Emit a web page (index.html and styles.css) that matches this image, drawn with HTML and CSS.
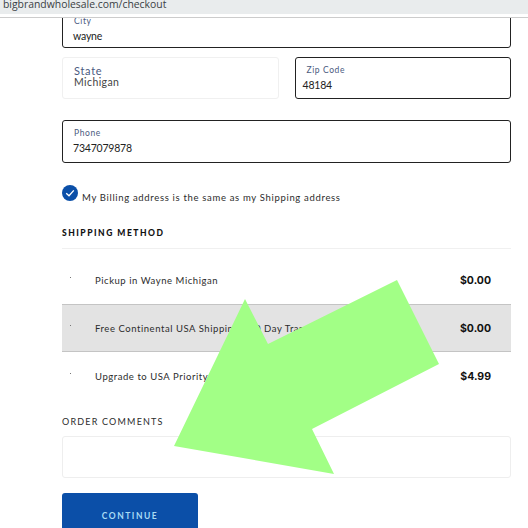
FILE: index.html
```html
<!DOCTYPE html>
<html lang="en" dir="ltr">
<head>
  <meta charset="utf-8">
  <title>Checkout</title>
  <link rel="stylesheet" href="styles.css">
</head>
<body>

  <div class="url-bar">bigbrandwholesale.com/checkout</div>

  <div class="checkout">
    <div class="field field-active field-city">
      <div class="field-label">City</div>
      <div class="field-value">wayne</div>
    </div>

    <div class="field-row">
      <div class="field field-empty">
        <div class="state-label">State</div>
        <div class="state-value">Michigan</div>
      </div>
      <div class="field field-active">
        <div class="field-label">Zip Code</div>
        <div class="field-value zip-value">48184</div>
      </div>
    </div>

    <div class="field field-active field-phone">
      <div class="field-label">Phone</div>
      <div class="field-value">7347079878</div>
    </div>

    <div class="billing-check">
      <svg class="check-icon" width="16" height="16" viewBox="0 0 16 16">
        <circle cx="8" cy="8" r="8" fill="#0b4fa8"/>
        <path d="M4.2 8.2 L7 10.8 L11.8 5.4" fill="none" stroke="#fff" stroke-width="1.3"/>
      </svg>
      <span class="check-text">My Billing address is the same as my Shipping address</span>
    </div>

    <h3 class="section-title">SHIPPING METHOD</h3>

    <div class="ship-list">
      <div class="ship-row ship-first">
        <span class="ship-dot"></span>
        <span class="ship-name">Pickup in Wayne Michigan</span>
        <span class="ship-price">$0.00</span>
      </div>
      <div class="ship-row ship-selected">
        <span class="ship-dot"></span>
        <span class="ship-name">Free Continental USA Shipping - 10 Day Transit</span>
        <span class="ship-price">$0.00</span>
      </div>
      <div class="ship-row">
        <span class="ship-dot"></span>
        <span class="ship-name">Upgrade to USA Priority Mail</span>
        <span class="ship-price">$4.99</span>
      </div>
    </div>

    <div class="comments-label">ORDER COMMENTS</div>
    <div class="comments-box"></div>

    <button class="continue-btn">CONTINUE</button>
  </div>

  <svg class="arrow" width="528" height="528" viewBox="0 0 528 528">
    <polygon points="245,299 268,344 397,280 439,364 312,429 334,474 174,446" fill="#a2ff86"/>
  </svg>

</body>
</html>
```

FILE: styles.css
```css
body {
  margin: 0;
  height: 528px;
  overflow: hidden;
  position: relative;
  background: #fff;
  font-family: "Lato", sans-serif;
  color: #222;
}

.url-bar {
  height: 14px;
  padding-left: 3px;
  background: #e9eced;
  border-bottom: 3px solid #fff;
  box-shadow: 0 1px 0 #ccc;
  font-family: "Open Sans", sans-serif;
  font-size: 10.4px;
  line-height: 8px;
  color: #3a3f44;
  position: relative;
  z-index: 1;
}

.checkout {
  padding: 0 17px 0 62px;
}

.field {
  box-sizing: border-box;
  border-radius: 3px;
  height: 43px;
  padding: 7px 11px;
}

.field-active {
  border: 1px solid #222;
}

.field-empty {
  border: 1px solid #f0f0f0;
}

.field-city {
  height: 50px;
  margin-top: -19px;
  padding-top: 17px;
}

.field-row {
  display: flex;
  gap: 16px;
  margin-top: 9px;
}

.field-row .field {
  flex: 1;
  height: 42px;
}

.field-phone {
  margin-top: 21px;
}

.field-label {
  font-size: 8.5px;
  line-height: 10px;
  letter-spacing: 0.6px;
  color: #4a5a80;
}

.field-value {
  font-size: 10.5px;
  line-height: 14px;
  margin-top: 3px;
  margin-left: -1px;
  letter-spacing: -0.2px;
  color: #222;
}

.zip-value {
  margin-left: -4px;
}

.state-label {
  font-size: 11px;
  line-height: 12px;
  letter-spacing: 0.7px;
  color: #4a5a80;
}

.state-value {
  font-size: 10.5px;
  line-height: 11px;
  letter-spacing: 0.4px;
  color: #444;
}

.billing-check {
  display: flex;
  align-items: flex-start;
  margin-top: 22px;
  height: 38px;
}

.check-icon {
  flex: none;
}

.check-text {
  margin: 7px 0 0 4px;
  font-size: 9.5px;
  line-height: 12px;
  letter-spacing: 0.67px;
  color: #2c2c2c;
}

.section-title {
  margin: 0;
  padding: 5px 0 9px;
  font-size: 8.5px;
  line-height: 11px;
  letter-spacing: 1.5px;
  font-weight: 900;
  color: #111;
  border-bottom: 1px solid #f0f0f0;
}

.ship-list {
  margin-bottom: 16px;
}

.ship-row {
  display: flex;
  align-items: center;
  box-sizing: border-box;
  height: 48px;
  padding: 0 20px 0 8px;
}

.ship-first {
  height: 55px;
  padding-top: 8px;
}

.ship-selected {
  background: #e3e3e3;
  border-top: 1px solid #c4c4c4;
  border-bottom: 1px solid #c4c4c4;
}

.ship-dot {
  width: 1px;
  height: 1px;
  margin-top: -6px;
  background: #777;
}

.ship-name {
  flex: 1;
  margin-left: 24px;
  font-size: 9.5px;
  letter-spacing: 0.55px;
  color: #2c2c2c;
}

.ship-price {
  font-family: "Inter", sans-serif;
  font-size: 10.5px;
  font-weight: 700;
  color: #111;
}

.comments-label {
  font-size: 9px;
  line-height: 11px;
  letter-spacing: 1.2px;
  color: #2c2c2c;
}

.comments-box {
  box-sizing: border-box;
  height: 42px;
  margin-top: 9px;
  border: 1px solid #eee;
  border-radius: 3px;
}

.continue-btn {
  display: block;
  width: 136px;
  height: 45px;
  margin-top: 15px;
  border: 0;
  border-radius: 3px;
  background: #0b4fa8;
  color: #a9dcf5;
  font-family: "Lato", sans-serif;
  font-size: 8.5px;
  font-weight: 700;
  letter-spacing: 1.5px;
}

.arrow {
  position: absolute;
  left: 0;
  top: 0;
}
```
